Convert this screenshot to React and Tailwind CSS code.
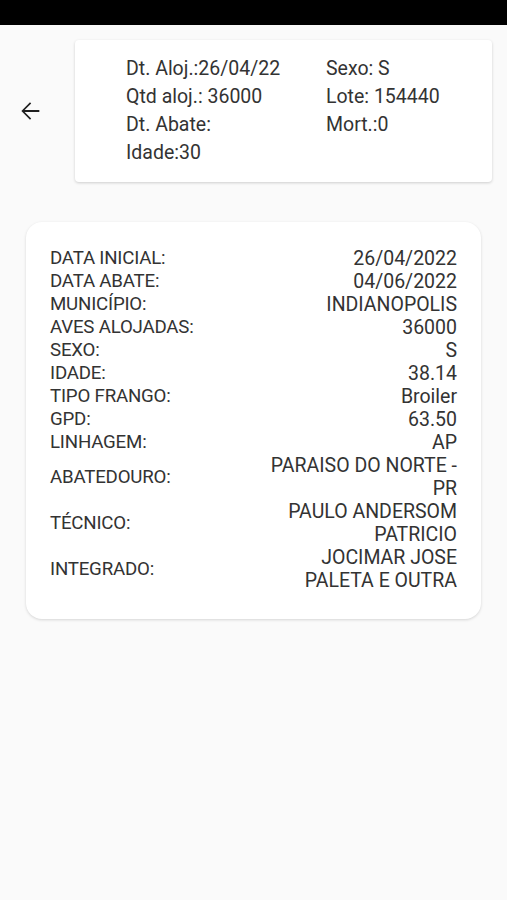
import React from "react";

const ROWS = [
  ["DATA INICIAL:", "26/04/2022"],
  ["DATA ABATE:", "04/06/2022"],
  ["MUNICÍPIO:", "INDIANOPOLIS"],
  ["AVES ALOJADAS:", "36000"],
  ["SEXO:", "S"],
  ["IDADE:", "38.14"],
  ["TIPO FRANGO:", "Broiler"],
  ["GPD:", "63.50"],
  ["LINHAGEM:", "AP"],
  ["ABATEDOURO:", "PARAISO DO NORTE - PR"],
  ["TÉCNICO:", "PAULO ANDERSOM PATRICIO"],
  ["INTEGRADO:", "JOCIMAR JOSE PALETA E OUTRA"],
];

function BackArrow() {
  return (
    <svg width="28" height="28" viewBox="0 0 24 24" fill="#1f1f1f">
      <path d="M20 11.2H7.4l5.6-5.6L12 4.6l-7.4 7.4 7.4 7.4 1-1-5.6-5.6H20v-1.6z" />
    </svg>
  );
}

export default function App() {
  return (
    <div
      className="min-h-[900px] w-full bg-[#fafafa] text-[#333333]"
      style={{ fontFamily: "Roboto, 'Noto Sans', sans-serif" }}
    >
      <div className="h-[25px] bg-black" />

      <div className="flex items-center pt-[15px] pr-[15px]">
        <div className="w-[75px] flex items-center pl-[16px]">
          <BackArrow />
        </div>
        <div className="flex-1 h-[142px] bg-white rounded-[4px] shadow-[0_1px_3px_rgba(0,0,0,0.18)] flex items-center pl-[51px] text-[19.5px] leading-[28px]">
          <div className="w-[200px]">
            <div>Dt. Aloj.:26/04/22</div>
            <div>Qtd aloj.: 36000</div>
            <div>Dt. Abate:</div>
            <div>Idade:30</div>
          </div>
          <div className="self-start pt-[15px]">
            <div>Sexo: S</div>
            <div>Lote: 154440</div>
            <div>Mort.:0</div>
          </div>
        </div>
      </div>

      <div className="mx-[26px] mt-[40px] w-[455px] bg-white rounded-[16px] shadow-[0_1px_3px_rgba(0,0,0,0.15)] px-[24px] pt-[25px] pb-[27px] leading-[23px]">
        {ROWS.map(([label, value]) => (
          <div key={label} className="grid grid-cols-2 items-center">
            <div className="text-[18.7px] tracking-[-0.2px]">{label}</div>
            <div className="text-right text-[19.5px]">{value}</div>
          </div>
        ))}
      </div>
    </div>
  );
}
